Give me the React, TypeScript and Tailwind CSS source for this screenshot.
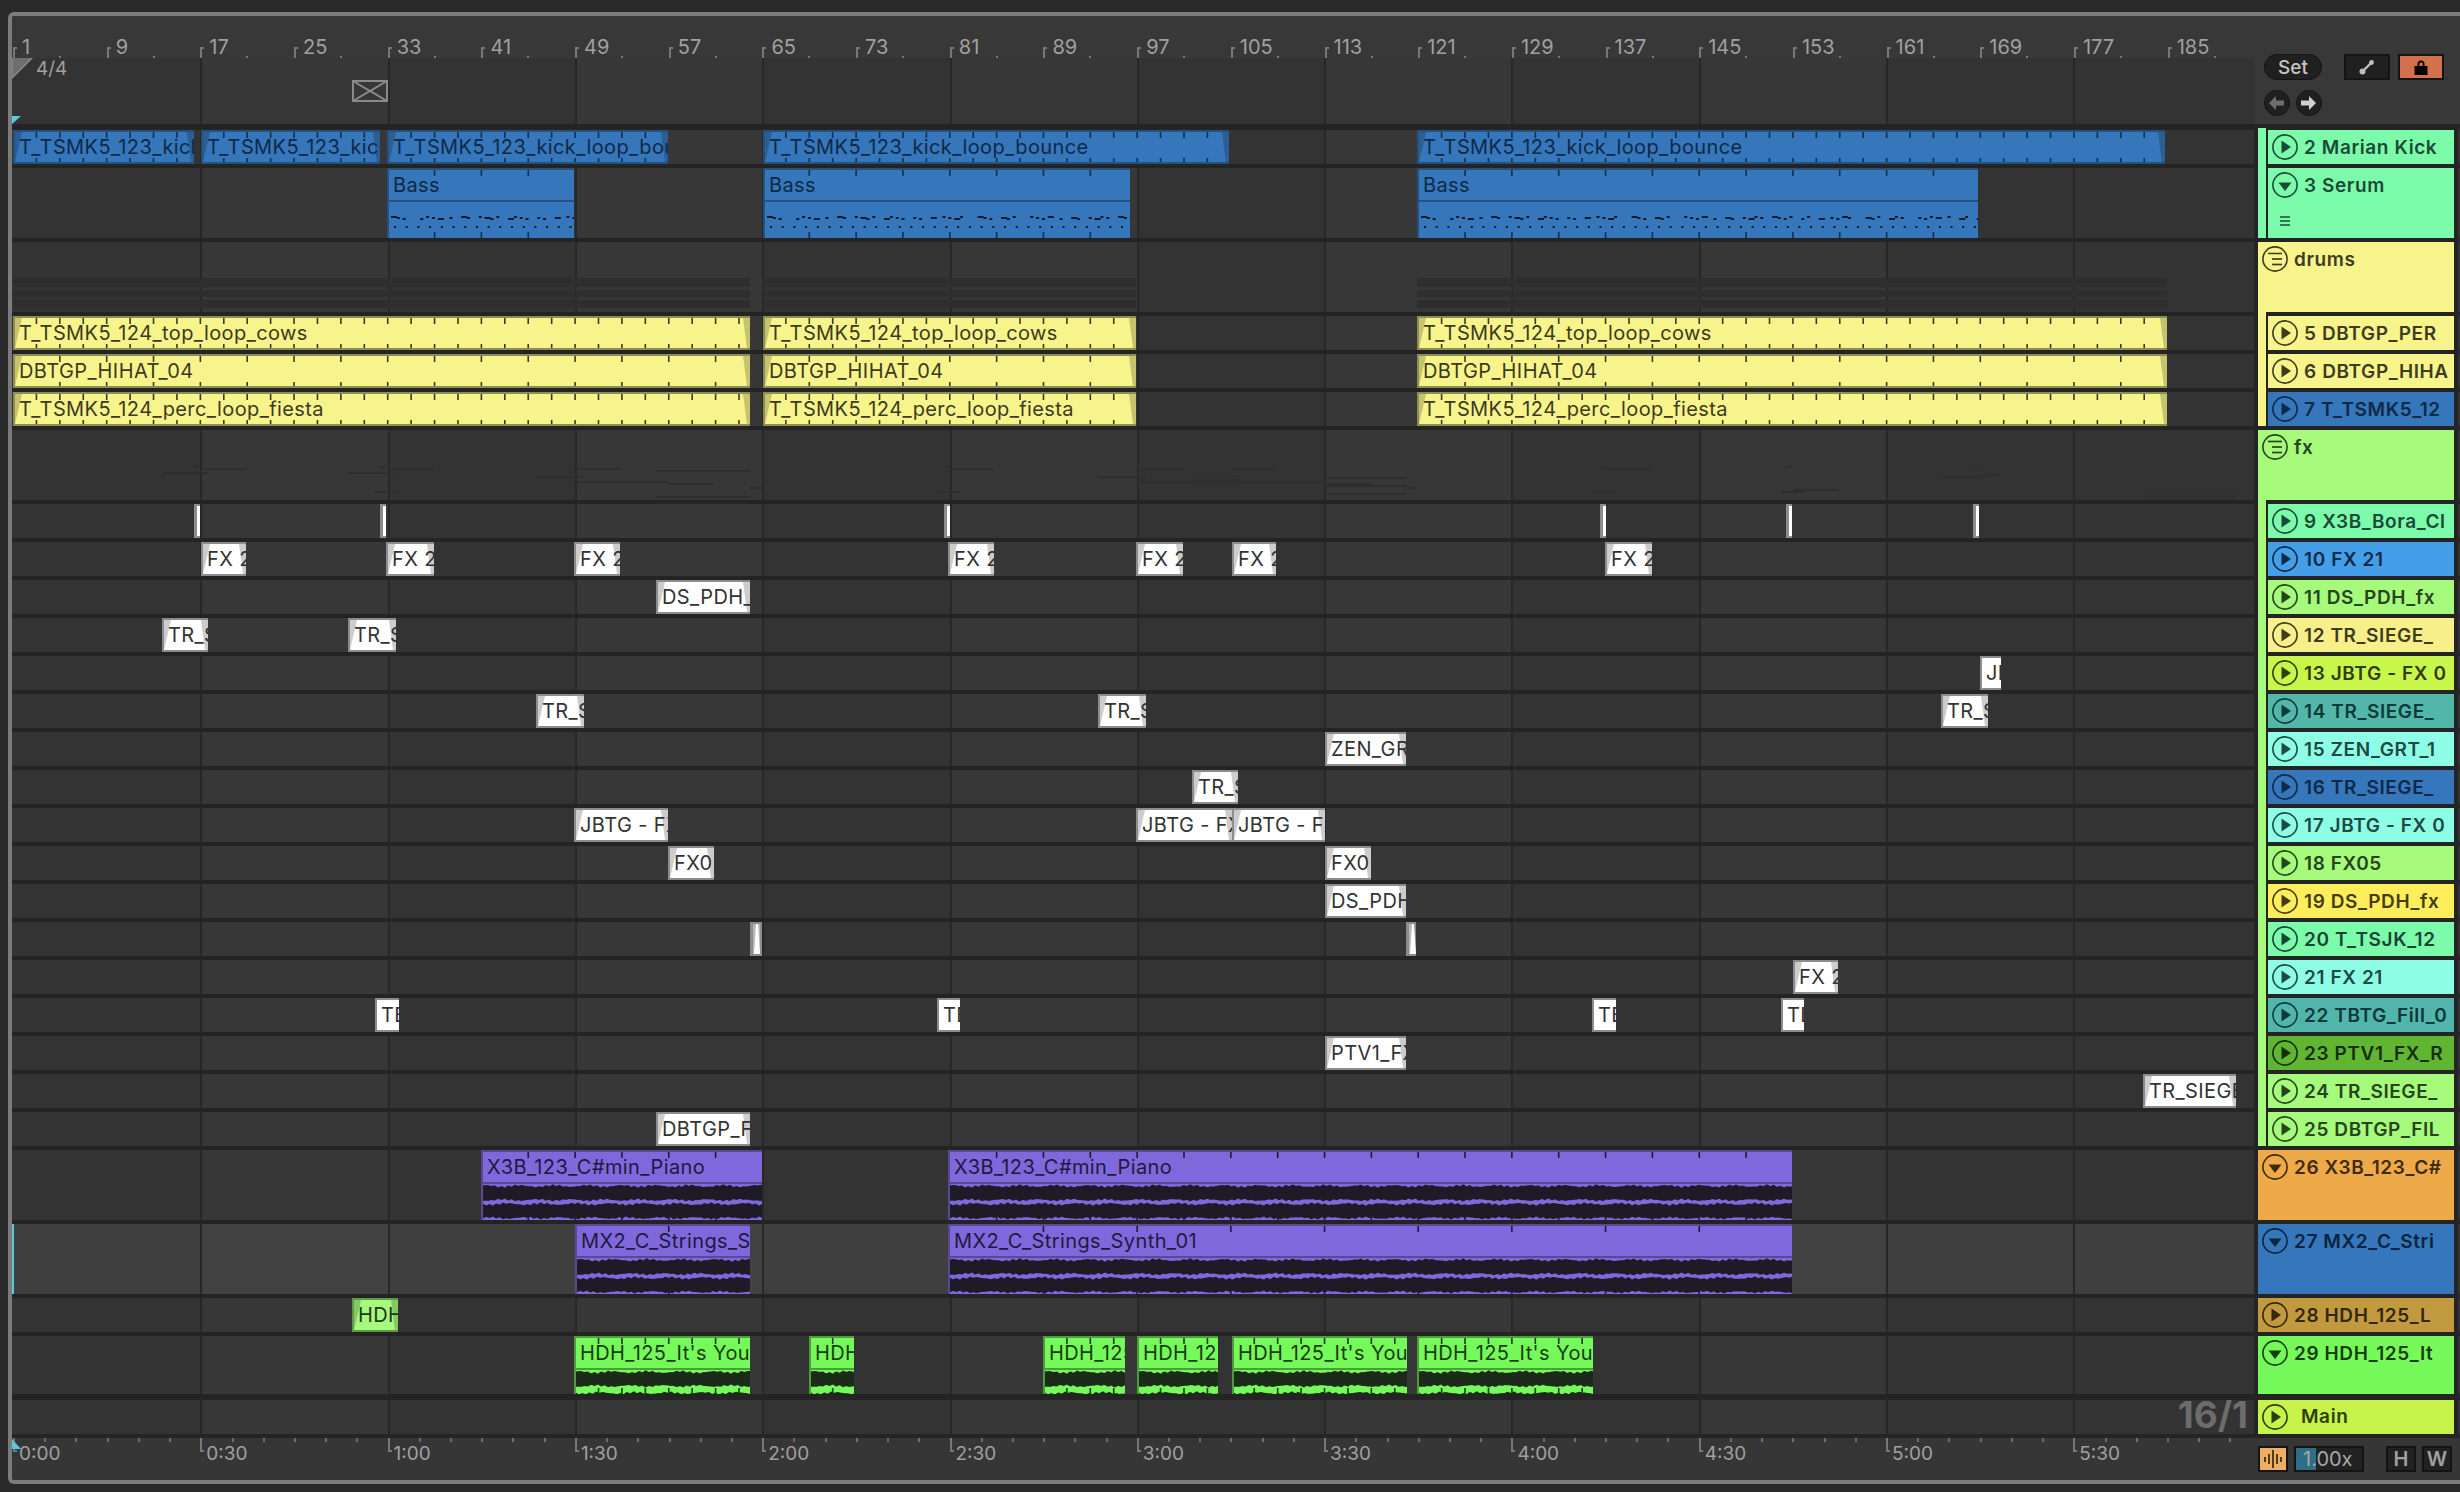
const ORIGIN = 12;
const BAR = 11.71;
const barX = (b: number) => 13 + (b - 1) * BAR;
const SEC30 = 187.3;

type Kind = 'blue' | 'yellow' | 'white' | 'purple' | 'green' | 'lime';
type ClipData = { x0: number; x1: number; text?: string; kind: Kind; ticks?: number; body?: 'wave' | 'notes' };

const KINDS: Record<Kind, { wrap: string; ink: string; wave: string }> = {
  blue: { wrap: 'bg-[#3676BA] text-[#0E2A47] border-[#23527F]', ink: '#12304F', wave: '#12304F' },
  yellow: { wrap: 'bg-[#F7F48C] text-[#3C3A1E] border-[#8F8E52]', ink: '#3C3A1E', wave: '#3C3A1E' },
  white: { wrap: 'bg-white text-[#333333] border-[#8C8C8C]', ink: '#333333', wave: '#333333' },
  purple: { wrap: 'bg-[#7F68DB] text-[#1F1A3D] border-[#574A94]', ink: '#1F1A3D', wave: '#1E1B26' },
  green: { wrap: 'bg-[#76F95A] text-[#163D10] border-[#4C9C3C]', ink: '#163D10', wave: '#1B2A19' },
  lime: { wrap: 'bg-[#A6FA7C] text-[#20381A] border-[#5F9A48]', ink: '#20381A', wave: '#20381A' },
};

const white = (x0: number, x1: number, text?: string): ClipData => ({ x0, x1, text, kind: 'white' });

type Row = {
  label: string;
  head: string;
  h: number;
  gap?: number;
  icon: 'play' | 'down' | 'group';
  strip?: string;
  lastNested?: boolean;
  stripBelow?: string;
  lane?: string;
  clips?: ClipData[];
};

const MINT = 'bg-[#7CFBAB] text-[#1B4A36]';
const YEL = 'bg-[#F7F48C] text-[#3E3C1F]';
const LIME = 'bg-[#A6FA7C] text-[#27451C]';
const AQUA = 'bg-[#8EFFE6] text-[#1D4A42]';
const STRIP_MINT = 'bg-[#7CFBAB]';
const STRIP_YEL = 'bg-[#F7F48C]';
const STRIP_LIME = 'bg-[#A6FA7C]';

const yellowSet = (a: string) => {
  const ticks = a.startsWith('DBTGP') ? 46.84 : 23.42;
  return [
    { x0: 13, x1: 750, text: a, kind: 'yellow' as Kind, ticks },
    { x0: 763, x1: 1136, text: a, kind: 'yellow' as Kind, ticks },
    { x0: 1417, x1: 2167, text: a, kind: 'yellow' as Kind, ticks },
  ];
};

const FX_ROWS: Row[] = [
  { label: '9 X3B_Bora_Cl', head: MINT, clips: [white(194, 200), white(380, 386), white(944, 950), white(1600, 1606), white(1786, 1792), white(1973, 1979)] },
  { label: '10 FX 21', head: 'bg-[#459EE8] text-[#0E2A47]', clips: [white(201, 246, 'FX 21'), white(386, 434, 'FX 21'), white(574, 620, 'FX 21'), white(948, 994, 'FX 21'), white(1136, 1183, 'FX 21'), white(1232, 1276, 'FX 21'), white(1605, 1652, 'FX 21')] },
  { label: '11 DS_PDH_fx', head: LIME, clips: [white(656, 750, 'DS_PDH_fx')] },
  { label: '12 TR_SIEGE_', head: 'bg-[#F7F08A] text-[#3E3C1F]', clips: [white(162, 208, 'TR_SIEGE'), white(348, 396, 'TR_SIEGE')] },
  { label: '13 JBTG - FX 0', head: 'bg-[#C9F64B] text-[#313D0E]', clips: [white(1980, 2001, 'JBTG')] },
  { label: '14 TR_SIEGE_', head: 'bg-[#52B7A8] text-[#0F3A3A]', clips: [white(536, 584, 'TR_SIEGE'), white(1098, 1146, 'TR_SIEGE'), white(1941, 1988, 'TR_SIEGE')] },
  { label: '15 ZEN_GRT_1', head: AQUA, clips: [white(1325, 1406, 'ZEN_GRT_1')] },
  { label: '16 TR_SIEGE_', head: 'bg-[#3676BA] text-[#0E2A47]', clips: [white(1192, 1238, 'TR_SIEGE')] },
  { label: '17 JBTG - FX 0', head: AQUA, clips: [white(574, 668, 'JBTG - FX 01'), white(1136, 1232, 'JBTG - FX 01'), white(1232, 1325, 'JBTG - FX 01')] },
  { label: '18 FX05', head: LIME, clips: [white(668, 714, 'FX05'), white(1325, 1371, 'FX05')] },
  { label: '19 DS_PDH_fx', head: 'bg-[#FFEE5C] text-[#453D12]', clips: [white(1325, 1406, 'DS_PDH_fx')] },
  { label: '20 T_TSJK_12', head: 'bg-[#7CFBAB] text-[#174434]', clips: [white(750, 762), white(1406, 1416)] },
  { label: '21 FX 21', head: AQUA, clips: [white(1793, 1838, 'FX 21')] },
  { label: '22 TBTG_Fill_0', head: 'bg-[#52B5AB] text-[#0F3838]', clips: [white(375, 399, 'TBTG'), white(937, 960, 'TBTG'), white(1592, 1616, 'TBTG'), white(1781, 1804, 'TBTG')] },
  { label: '23 PTV1_FX_R', head: 'bg-[#60B633] text-[#172F08]', clips: [white(1325, 1406, 'PTV1_FX_R')] },
  { label: '24 TR_SIEGE_', head: LIME, clips: [white(2143, 2236, 'TR_SIEGE_01')] },
  { label: '25 DBTGP_FIL', head: LIME, lastNested: true, clips: [white(656, 750, 'DBTGP_FILL')] },
].map((r) => ({ ...r, h: 34, icon: 'play' as const, strip: STRIP_LIME }));

const HDH = "HDH_125_It's You";

const ROWS: Row[] = [
  {
    label: '2 Marian Kick', head: MINT, h: 34, icon: 'play', strip: STRIP_MINT,
    clips: [
      { x0: 13, x1: 194, text: 'T_TSMK5_123_kick_loop_bounce', kind: 'blue', ticks: 23.42 },
      { x0: 201, x1: 380, text: 'T_TSMK5_123_kick_loop_bounce', kind: 'blue', ticks: 23.42 },
      { x0: 387, x1: 668, text: 'T_TSMK5_123_kick_loop_bounce', kind: 'blue', ticks: 23.42 },
      { x0: 763, x1: 1229, text: 'T_TSMK5_123_kick_loop_bounce', kind: 'blue', ticks: 23.42 },
      { x0: 1417, x1: 2165, text: 'T_TSMK5_123_kick_loop_bounce', kind: 'blue', ticks: 23.42 },
    ],
  },
  {
    label: '3 Serum', head: MINT, h: 70, icon: 'down', strip: STRIP_MINT, lastNested: true,
    clips: [
      { x0: 387, x1: 574, text: 'Bass', kind: 'blue', ticks: 46.84, body: 'notes' },
      { x0: 763, x1: 1130, text: 'Bass', kind: 'blue', ticks: 46.84, body: 'notes' },
      { x0: 1417, x1: 1978, text: 'Bass', kind: 'blue', ticks: 46.84, body: 'notes' },
    ],
  },
  { label: 'drums', head: YEL, h: 70, icon: 'group', stripBelow: STRIP_YEL },
  { label: '5 DBTGP_PER', head: YEL, h: 34, icon: 'play', strip: STRIP_YEL, clips: yellowSet('T_TSMK5_124_top_loop_cows') },
  { label: '6 DBTGP_HIHA', head: YEL, h: 34, icon: 'play', strip: STRIP_YEL, clips: yellowSet('DBTGP_HIHAT_04') },
  { label: '7 T_TSMK5_12', head: 'bg-[#3676BA] text-[#0E2A47]', h: 34, icon: 'play', strip: STRIP_YEL, lastNested: true, clips: yellowSet('T_TSMK5_124_perc_loop_fiesta') },
  { label: 'fx', head: LIME, h: 70, icon: 'group', stripBelow: STRIP_LIME },
  ...FX_ROWS,
  {
    label: '26 X3B_123_C#', head: 'bg-[#EEAA48] text-[#3F2A0C]', h: 70, icon: 'down',
    clips: [
      { x0: 481, x1: 762, text: 'X3B_123_C#min_Piano', kind: 'purple', ticks: 46.84, body: 'wave' },
      { x0: 948, x1: 1792, text: 'X3B_123_C#min_Piano', kind: 'purple', ticks: 46.84, body: 'wave' },
    ],
  },
  {
    label: '27 MX2_C_Stri', head: 'bg-[#3676BA] text-[#0B2540]', h: 70, icon: 'down', lane: 'bg-[#3F3F3F]',
    clips: [
      { x0: 575, x1: 750, text: 'MX2_C_Strings_Synth_01', kind: 'purple', ticks: 93.68, body: 'wave' },
      { x0: 948, x1: 1792, text: 'MX2_C_Strings_Synth_01', kind: 'purple', ticks: 93.68, body: 'wave' },
    ],
  },
  { label: '28 HDH_125_L', head: 'bg-[#C19A3F] text-[#35270A]', h: 34, icon: 'play', clips: [{ x0: 352, x1: 398, text: 'HDH_125_Loop', kind: 'lime' }] },
  {
    label: '29 HDH_125_It', head: 'bg-[#76F95A] text-[#163D10]', h: 58, gap: 6, icon: 'down',
    clips: [
      { x0: 574, x1: 750, text: HDH, kind: 'green', ticks: 23.42, body: 'wave' },
      { x0: 809, x1: 854, text: HDH, kind: 'green', ticks: 23.42, body: 'wave' },
      { x0: 1043, x1: 1125, text: HDH, kind: 'green', ticks: 23.42, body: 'wave' },
      { x0: 1137, x1: 1218, text: HDH, kind: 'green', ticks: 23.42, body: 'wave' },
      { x0: 1232, x1: 1407, text: HDH, kind: 'green', ticks: 23.42, body: 'wave' },
      { x0: 1417, x1: 1593, text: HDH, kind: 'green', ticks: 23.42, body: 'wave' },
    ],
  },
];

const GRID = Array.from({ length: 11 }, (_, i) => 13 + (i + 1) * SEC30 - ORIGIN);

const noise = (i: number) => Math.sin(i * 1.7) * 0.5 + Math.sin(i * 0.37) * 0.8 + Math.sin(i * 4.3 + 1) * 0.5;

function wavePath(w: number, cy: number, amp: number, seed: number) {
  let top = `M0 ${cy}`;
  let bottom = '';
  for (let x = 0; x <= w; x += 2) {
    const n = noise(x * 0.5 + seed);
    top += ` L${x} ${(cy - amp - n).toFixed(1)}`;
    bottom = ` L${x} ${(cy + amp + n * 0.9).toFixed(1)}` + bottom;
  }
  return top + bottom + ' Z';
}

function Waveform({ w, h, kind }: { w: number; h: number; kind: Kind }) {
  const short = h < 30;
  return (
    <svg width={w} height={h} className="block">
      <path d={wavePath(w, 9, 7, 3)} fill={KINDS[kind].wave} />
      <path d={wavePath(w, short ? 30 : 27, 7, 9)} fill={KINDS[kind].wave} />
    </svg>
  );
}

function Notes({ w }: { w: number }) {
  const bits: React.ReactElement[] = [];
  for (let x = 2, i = 0; x < w; x += 5.85, i++) {
    if (i % 8 !== 3 && i % 5 !== 4) {
      bits.push(<rect key={`a${i}`} x={x} y={14 + (i % 3)} width={i % 4 === 0 ? 6 : 3} height={2} />);
    }
    if (i % 2 === 0) {
      bits.push(<rect key={`b${i}`} x={x + 3} y={24} width={2} height={2} />);
    }
  }
  return (
    <svg width={w} height={36} className="block" fill="#0C1C30">
      {bits}
    </svg>
  );
}

function Clip({ clip, rowH }: { clip: ClipData; rowH: number }) {
  const w = clip.x1 - clip.x0;
  const style = KINDS[clip.kind];
  const two = !!clip.body;
  const sliver = !clip.text;
  const ticks: number[] = [];
  if (clip.ticks) {
    const first = Math.ceil((clip.x0 + 2 - 13) / clip.ticks);
    for (let k = first; 13 + k * clip.ticks < clip.x1 - 2; k++) {
      ticks.push(13 + k * clip.ticks - clip.x0);
    }
  }
  return (
    <div
      className={`absolute top-0 bottom-0 overflow-hidden border-t-[2px] ${two ? '' : 'border-b-[2px]'} ${sliver ? 'border-l-[3px]' : 'border-l-[2px]'} ${style.wrap}`}
      style={{ left: clip.x0 - ORIGIN, width: w }}
    >
      {sliver ? (
        w > 8 && (
          <div className="h-full border-r-[2px] border-[#8C8C8C] bg-[#B8B8B8]">
            <svg width={7} height={30} className="block fill-white">
              <polygon points="3,0 5,0 7,30 1,30" />
            </svg>
          </div>
        )
      ) : two ? (
        <div className="flex h-full flex-col">
          <div className="flex h-[30px] shrink-0 items-center overflow-hidden whitespace-nowrap pl-[4px] text-[20px] leading-none tracking-[0.4px]">
            {clip.text}
          </div>
          <div className={`h-[2px] shrink-0 border-t-[2px] ${style.wrap}`} />
          <div className="min-h-0 flex-1 overflow-hidden">
            {clip.body === 'wave' ? <Waveform w={w} h={rowH - 34} kind={clip.kind} /> : <Notes w={w} />}
          </div>
        </div>
      ) : (
        <>
          {w > 30 && (
            <svg width={w} height={rowH} className="absolute left-0 top-0 fill-black/20">
              <polygon points="0,0 7,0 0,30" />
              <polygon points={`${w - 9},0 ${w - 2},0 ${w - 2},30 ${w - 5},30`} />
            </svg>
          )}
          <div className="relative flex h-full items-center overflow-hidden whitespace-nowrap pl-[4px] text-[20px] leading-none tracking-[0.4px]">
            {clip.text}
          </div>
        </>
      )}
      {ticks.length > 0 && (
        <svg width={w} height={rowH} className="absolute -left-[2px] -top-[2px]" stroke={style.ink} strokeWidth={1.6}>
          {ticks.map((t) => (
            <g key={t}>
              <line x1={t} x2={t} y1={2} y2={8} />
              <line x1={t} x2={t} y1={rowH - 6} y2={rowH} />
            </g>
          ))}
        </svg>
      )}
    </div>
  );
}

function TrackIcon({ type }: { type: Row['icon'] }) {
  return (
    <svg width={26} height={26} viewBox="0 0 26 26" className="shrink-0">
      <circle cx={13} cy={13} r={12.1} fill="none" stroke="currentColor" strokeWidth={1.6} />
      {type === 'play' && <polygon points="9.5,6.5 19,13 9.5,19.5" fill="currentColor" />}
      {type === 'down' && <polygon points="6.5,10.5 19.5,10.5 13,19" fill="currentColor" />}
      {type === 'group' && (
        <g stroke="currentColor" strokeWidth={1.7}>
          <line x1={6} x2={20} y1={7.5} y2={7.5} />
          <line x1={10} x2={20} y1={13} y2={13} />
          <line x1={10} x2={20} y1={18.5} y2={18.5} />
        </g>
      )}
    </svg>
  );
}

function Header({ row }: { row: Row }) {
  const box = (
    <div className={`flex h-full min-w-0 flex-1 flex-col overflow-hidden pr-[6px] ${row.head}`}>
      <div className="flex h-[34px] shrink-0 items-center gap-[6px] overflow-hidden pl-[4px]">
        <TrackIcon type={row.icon} />
        <span className="whitespace-nowrap text-[19px] font-semibold leading-none tracking-[0.6px]">{row.label}</span>
      </div>
      {row.label === '3 Serum' && (
        <svg width={10} height={10} className="ml-[12px] mt-[14px]" stroke="currentColor" strokeWidth={1.6}>
          <line x1={0} x2={10} y1={1} y2={1} />
          <line x1={0} x2={10} y1={5} y2={5} />
          <line x1={0} x2={10} y1={9} y2={9} />
        </svg>
      )}
    </div>
  );
  if (row.strip) {
    return (
      <div className="flex w-[196px] shrink-0 items-start">
        <div className={`w-[8px] ${row.strip}`} style={{ height: row.lastNested ? row.h : row.h + 4 }} />
        <div className="ml-[2px] flex w-[186px]" style={{ height: row.h }}>{box}</div>
      </div>
    );
  }
  return (
    <div className="flex w-[196px] shrink-0 flex-col">
      <div className="flex" style={{ height: row.h }}>{box}</div>
      {row.stripBelow && <div className={`h-[4px] w-[8px] ${row.stripBelow}`} />}
    </div>
  );
}

function GridLines() {
  return (
    <>
      {GRID.slice(0, -1).map((x, i) =>
        i % 2 === 0 ? (
          <div key={`b${x}`} className="absolute bottom-0 top-0 bg-white/[0.018]" style={{ left: x, width: SEC30 }} />
        ) : null,
      )}
      {GRID.map((x) => (
        <div key={x} className="absolute bottom-0 top-0 w-[2px] bg-[#272727]" style={{ left: x }} />
      ))}
    </>
  );
}

function Overview({ row }: { row: Row }) {
  if (row.label === 'drums') {
    return (
      <>
        {[[13, 750], [763, 1136], [1417, 2167]].map(([a, b]) => (
          <div key={a} className="absolute top-[36px] flex flex-col gap-[3px]" style={{ left: a - ORIGIN, width: b - a }}>
            <div className="h-[9px] bg-[#2E2E2E]" />
            <div className="h-[7px] bg-[#2E2E2E]" />
            <div className="h-[8px] bg-[#2E2E2E]" />
          </div>
        ))}
      </>
    );
  }
  if (row.label === 'fx') {
    return (
      <>
        {FX_ROWS.flatMap((r, i) =>
          (r.clips ?? []).map((c) => (
            <div
              key={`${i}-${c.x0}`}
              className="absolute h-[2px] bg-[#2E2E2E]"
              style={{ left: c.x0 - ORIGIN, width: c.x1 - c.x0, top: 36 + i * 1.9 }}
            />
          )),
        )}
      </>
    );
  }
  return null;
}

function TrackRow({ row }: { row: Row }) {
  const gap = row.gap ?? 4;
  return (
    <div className="flex bg-[#242424]" style={{ height: row.h + gap }}>
      <div
        className={`relative w-[2242px] shrink-0 overflow-hidden ${row.lane ?? 'bg-[#333333]'}`}
        style={{ height: row.h }}
      >
        <GridLines />
        <Overview row={row} />
        {row.label.startsWith('27 ') && <div className="absolute bottom-0 left-0 top-0 w-[2px] bg-[#5CC8DC]" />}
        {row.clips?.map((c) => <Clip key={c.x0} clip={c} rowH={row.h} />)}
      </div>
      <div className="ml-[4px]">
        <Header row={row} />
      </div>
      <div className="ml-[4px] w-[2px] bg-[#333333]" style={{ height: row.h }} />
    </div>
  );
}

function TopRuler() {
  const labels = Array.from({ length: 24 }, (_, i) => 1 + i * 8);
  return (
    <div className="relative h-[42px] w-full bg-[#383838]">
      {labels.map((b) => (
        <div key={b} className="absolute top-[19px] flex items-start" style={{ left: barX(b) - ORIGIN }}>
          <div className="mt-[12px] h-[11px] w-[4px] border-l-[2px] border-t-[2px] border-[#777777]" />
          <span className="ml-[5px] text-[20px] leading-[24px] text-[#A0A0A0]">{b}</span>
          <div className="absolute left-[46px] top-[21px] h-[2px] w-[2px] bg-[#777777]" />
        </div>
      ))}
    </div>
  );
}

function TimeRuler() {
  const labels = Array.from({ length: 12 }, (_, i) => `${Math.floor(i / 2)}:${i % 2 ? '30' : '00'}`);
  return (
    <div className="relative h-[42px] w-[2242px] shrink-0 overflow-hidden">
      {labels.map((t, i) => (
        <div key={t} className="absolute top-0 h-full" style={{ left: i * SEC30 + 1 }}>
          <div className="absolute left-0 top-0 h-[14px] w-[4px] border-b-[2px] border-l-[2px] border-[#777777]" />
          <span className="absolute left-[6px] top-[5px] text-[19px] leading-[22px] text-[#A0A0A0]">{t}</span>
          {[1, 2, 3, 4, 5].map((k) => (
            <div key={k} className="absolute top-0 h-[4px] w-[2px] bg-[#6A6A6A]" style={{ left: (k * SEC30) / 6 }} />
          ))}
        </div>
      ))}
      <svg width={9} height={10} className="absolute left-0 top-[1px] fill-[#5CC8DC]">
        <polygon points="0,0 9,10 0,10" />
      </svg>
    </div>
  );
}

function DarkBox({ className, children }: { className: string; children?: React.ReactNode }) {
  return (
    <div className={`flex h-[26px] items-center justify-center border-[2px] border-[#141414] ${className}`}>{children}</div>
  );
}

function TopControls() {
  return (
    <div className="flex w-[206px] shrink-0 flex-col bg-[#383838] pl-[10px] pt-[38px]">
      <div className="flex items-center">
        <div className="flex h-[26px] w-[58px] items-center justify-center rounded-full border-[1.5px] border-[#141414] bg-[#202020] text-[19px] font-medium leading-none text-[#C4C4C4]">
          Set
        </div>
        <DarkBox className="ml-[22px] w-[46px] bg-[#202020]">
          <svg width={16} height={16} viewBox="0 0 16 16">
            <line x1={3} y1={13} x2={13} y2={3} stroke="#BDBDBD" strokeWidth={2.4} />
            <circle cx={3.5} cy={12.5} r={3} fill="#BDBDBD" />
            <circle cx={12.5} cy={3.5} r={2.4} fill="#BDBDBD" />
          </svg>
        </DarkBox>
        <DarkBox className="ml-[8px] w-[46px] bg-[#D4714D]">
          <svg width={16} height={16} viewBox="0 0 16 16" className="fill-black">
            <path d="M4.5 7V5a3.5 3.5 0 0 1 7 0v2h-1.8V5a1.7 1.7 0 0 0-3.4 0v2z" />
            <rect x={1.5} y={7} width={13} height={9} />
          </svg>
        </DarkBox>
      </div>
      <div className="mt-[10px] flex gap-[6px]">
        <div className="flex h-[26px] w-[26px] items-center justify-center rounded-full border-[1.5px] border-[#141414] bg-[#202020]">
          <svg width={16} height={14} viewBox="0 0 16 14" fill="#6E6E6E">
            <polygon points="0,7 7,0 7,4.5 15,4.5 15,9.5 7,9.5 7,14" />
          </svg>
        </div>
        <div className="flex h-[26px] w-[26px] items-center justify-center rounded-full border-[1.5px] border-[#141414] bg-[#202020]">
          <svg width={16} height={14} viewBox="0 0 16 14" fill="#D0D0D0">
            <polygon points="15,7 8,0 8,4.5 0,4.5 0,9.5 8,9.5 8,14" />
          </svg>
        </div>
      </div>
    </div>
  );
}

function BottomControls() {
  return (
    <div className="flex items-start pl-[4px] pt-[8px]">
      <DarkBox className="w-[30px] bg-[#F0AE62]">
        <svg width={20} height={18} viewBox="0 0 20 18" stroke="#2A1C08" strokeWidth={1.6}>
          <line x1={2} x2={2} y1={7} y2={12} />
          <line x1={6} x2={6} y1={4} y2={14} />
          <line x1={10} x2={10} y1={0} y2={18} />
          <line x1={14} x2={14} y1={4} y2={14} />
          <line x1={18} x2={18} y1={7} y2={12} />
        </svg>
      </DarkBox>
      <DarkBox className="relative ml-[6px] w-[70px] justify-start overflow-hidden bg-[#222222]">
        <div className="absolute bottom-0 left-0 top-0 w-[20px] bg-[#2F6F85]" />
        <span className="relative ml-[7px] text-[20px] leading-none text-[#A8A8A8]">1.00x</span>
      </DarkBox>
      <DarkBox className="ml-[22px] w-[30px] bg-[#222222] text-[20px] font-semibold leading-none text-[#A0A0A0]">H</DarkBox>
      <DarkBox className="ml-[6px] w-[30px] bg-[#222222] text-[20px] font-semibold leading-none text-[#A0A0A0]">W</DarkBox>
    </div>
  );
}

export default function App() {
  return (
    <div className="h-[1492px] w-[2460px] overflow-hidden bg-[#2A2A2A] pl-[8px] pt-[12px] [font-family:Inter,sans-serif]">
      <div className="h-[1472px] w-[2452px] overflow-hidden rounded-l-[6px] border-b-[4px] border-l-[4px] border-t-[4px] border-[#7C7C7C] bg-[#363636]">
        <div className="flex h-[108px]">
          <div className="relative w-[2242px] shrink-0">
            <TopRuler />
            <div className="relative h-[66px] overflow-hidden bg-[#333333]">
              <GridLines />
              <svg width={24} height={24} className="absolute left-0 top-[-2px]">
                <polygon points="0,0 22,0 0,22" fill="#6E6E6E" stroke="#8A8A8A" strokeWidth={1.5} />
              </svg>
              <span className="absolute left-[24px] top-[0px] text-[19px] leading-[22px] text-[#A0A0A0]">4/4</span>
              <svg width={36} height={22} className="absolute left-[340px] top-[22px]" stroke="#8A8A8A" fill="none" strokeWidth={2}>
                <rect x={1} y={1} width={34} height={20} />
                <path d="M1 1 L18 11 L35 1 M1 21 L18 11 L35 21" />
              </svg>
              <svg width={9} height={8} className="absolute bottom-0 left-0 fill-[#5CC8DC]">
                <polygon points="0,0 9,0 0,8" />
              </svg>
            </div>
          </div>
          <TopControls />
        </div>
        <div className="flex h-[6px] items-end bg-[#242424]">
          <div className={`ml-[2246px] h-[2px] w-[8px] ${STRIP_MINT}`} />
        </div>
        {ROWS.map((r) => <TrackRow key={r.label} row={r} />)}
        <div className="flex h-[38px] bg-[#242424]">
          <div className="relative h-[34px] w-[2242px] shrink-0 overflow-hidden bg-[#333333]">
            <GridLines />
            <span className="absolute right-[6px] top-[-2px] text-[37px] font-bold leading-[34px] text-[#6C6C6C]">16/1</span>
          </div>
          <div className="ml-[4px] flex h-[34px] w-[196px] items-center bg-[#C6F44B] pl-[4px] text-[#2F3D0E]">
            <TrackIcon type="play" />
            <span className="ml-[13px] text-[19px] font-semibold tracking-[0.6px]">Main</span>
          </div>
          <div className="ml-[4px] h-[34px] w-[2px] bg-[#333333]" />
        </div>
        <div className="flex h-[42px] bg-[#363636]">
          <TimeRuler />
          <BottomControls />
        </div>
      </div>
    </div>
  );
}
